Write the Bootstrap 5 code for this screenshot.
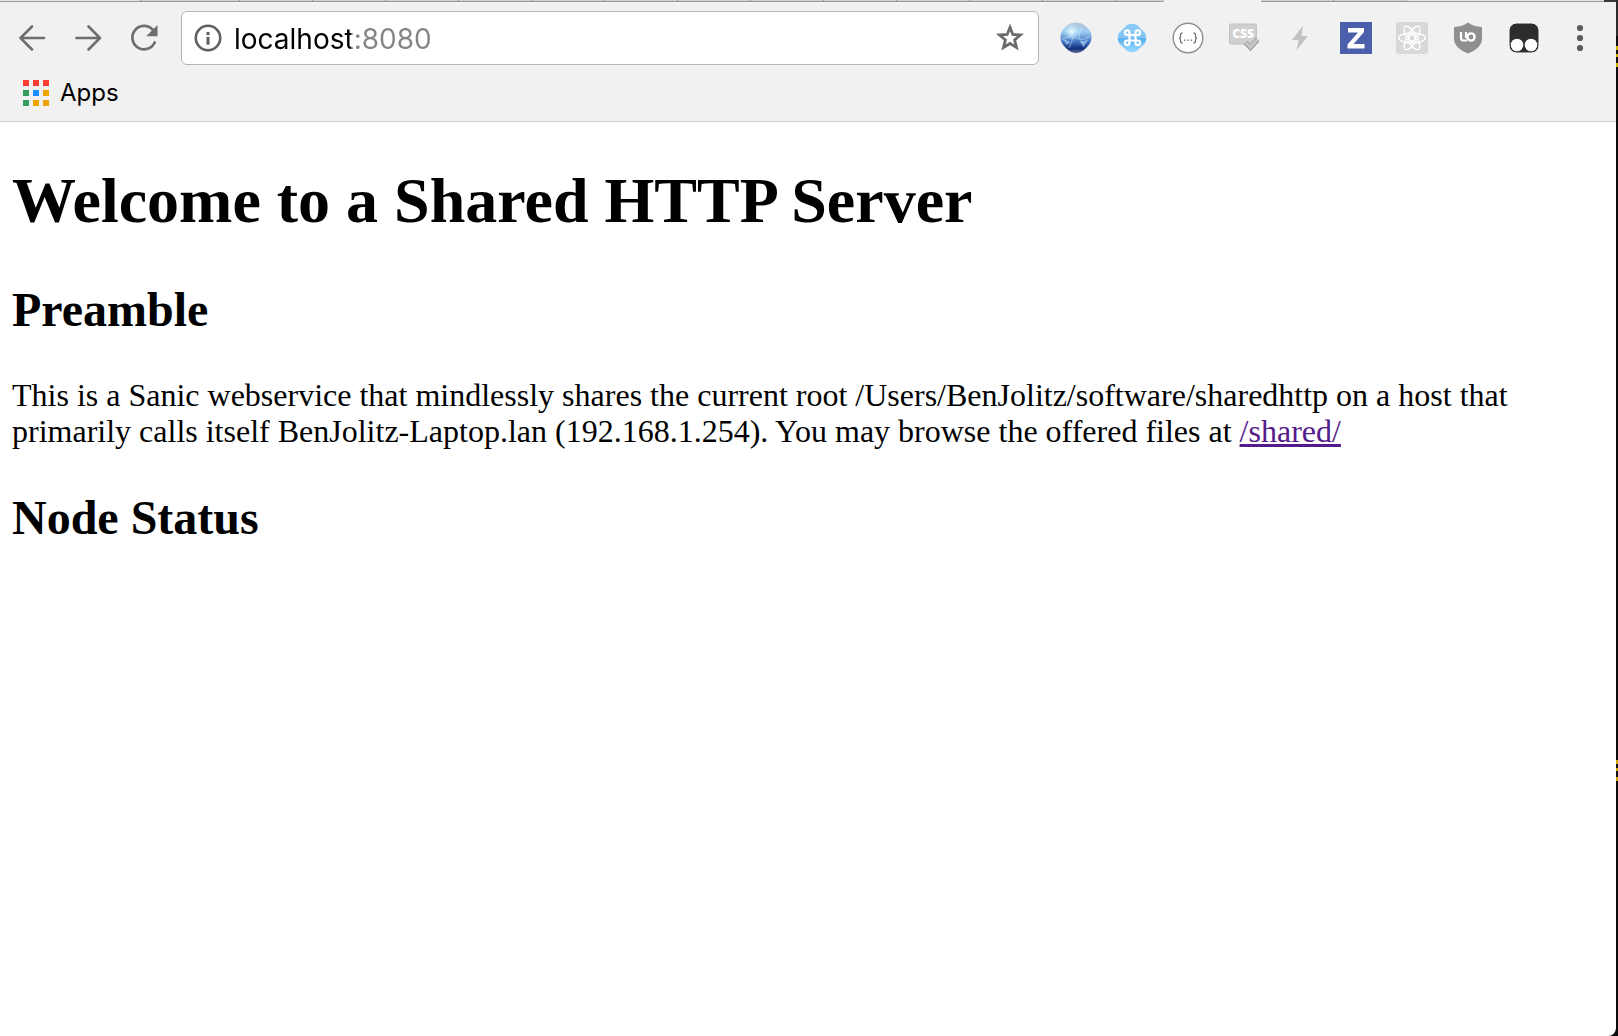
<!DOCTYPE html>
<html lang="en">
<head>
<meta charset="utf-8">
<meta name="viewport" content="width=device-width, initial-scale=1">
<title>localhost:8080</title>
<link href="https://cdn.jsdelivr.net/npm/bootstrap@5.3.0/dist/css/bootstrap.min.css" rel="stylesheet">
<style>
  body { background: linear-gradient(#2b2b2e 0 36px, #0c0c0e 36px 46px, #c9b400 46px 50px, #111 50px 54px, #c9b400 54px 57px, #111 57px 63px, #c9b400 63px 67px, #0c0c0e 67px 760px, #c9a800 760px 764px, #111 764px 768px, #c9a800 768px 771px, #111 771px 777px, #c9a800 777px 781px, #0c0c0e 781px); font-family: Inter, "Liberation Sans", sans-serif; color: #000; }
  .desktop-edge { padding-right: 2px; }
  .browser { background: #fff; border-bottom-right-radius: 8px; overflow: hidden; }
  .window-top { background: #3a3836; }
  .tab-strip { height: 2px; background: #e4e4e4; margin-right: 12px; }
  .tab-edge { flex: 0 1 73px; background: #d0d0d0; border-right: 1px solid #999; border-bottom: 1px solid #999; }
  .tab-edge.first { flex-basis: 141px; background: #e4e4e4; }
  .tab-edge.second { flex-basis: 99px; }
  .tab-edge.last { flex-basis: 48px; border-right: 0; border-radius: 0 0 2px 0; }
  .tab-edge.current { flex-basis: 97px; background: #f1f1f1; border: 0; }
  .tab-rest { border-bottom: 1px solid #999; }
  .chrome-bar { background: #f1f1f1; border-bottom: 1px solid #d2d2d2; }
  .toolbar-row { padding: 9px 8px 0 4px; }
  .tool { width: 56px; height: 54px; padding: 0; border: 0; border-radius: 4px; display: flex; align-items: center; justify-content: center; flex: none; }
  .omnibox { height: 54px; margin: 0 9px; border: 1px solid #b5b5b5; border-radius: 6px; background: #fff; }
  .omnibox .tool { width: 52px; }
  .omnibox .tool:last-child { width: 56px; }
  .address { font-size: 28px; line-height: 36px; height: 52px; border: 0; padding: 2px 0 0; min-width: 0; background: linear-gradient(90deg, #000 117px, #858585 117px); -webkit-background-clip: text; background-clip: text; -webkit-text-fill-color: transparent; outline: 0; }
  .bookmarks-row { height: 56px; padding: 0 23px; }
  .apps-link { font-size: 24px; line-height: 32px; gap: 11px; color: #000; }
  .served-page { font-family: "Liberation Serif", serif; padding: 43px 12px 0; font-size: 32px; line-height: 36px; min-height: calc(100vh - 122px); }
  .served-page h1 { font-size: 64px; line-height: 72px; font-weight: 700; margin: 0 0 46px; }
  .served-page h2 { font-size: 48px; line-height: 54px; font-weight: 700; margin: 0 0 40px; }
  .served-page p { margin: 0 0 42px; }
  .served-page a { color: #551a8b; }
</style>
</head>
<body>
<div class="desktop-edge">
<div class="browser min-vh-100">
  <header class="window-top">
    <div class="tab-strip d-flex">
      <div class="tab-edge first"></div><div class="tab-edge second"></div>
      <div class="tab-edge"></div><div class="tab-edge"></div><div class="tab-edge"></div><div class="tab-edge"></div>
      <div class="tab-edge"></div><div class="tab-edge"></div><div class="tab-edge"></div><div class="tab-edge"></div>
      <div class="tab-edge"></div><div class="tab-edge"></div><div class="tab-edge"></div><div class="tab-edge"></div>
      <div class="tab-edge last"></div><div class="tab-edge current"></div>
      <div class="tab-edge"></div><div class="tab-edge"></div><div class="tab-rest flex-fill"></div>
    </div>
    <div class="chrome-bar">
      <nav class="toolbar-row d-flex align-items-center" aria-label="Browser toolbar">
        <button class="btn tool" type="button" aria-label="Back"><svg width="32" height="32" viewBox="0 0 32 32" fill="none" stroke="#6e6e6e" stroke-width="2.6" stroke-linecap="round"><path d="M16 4.500 4.500 16 16 27.500M4.500 16H28"/></svg></button>
        <button class="btn tool" type="button" aria-label="Forward"><svg width="32" height="32" viewBox="0 0 32 32" fill="none" stroke="#6e6e6e" stroke-width="2.600" stroke-linecap="round"><path d="M16.500 4.500 28 16 16.500 27.500M28 16H4.500"/></svg></button>
        <button class="btn tool" type="button" aria-label="Reload"><svg width="32" height="32" viewBox="0 0 32 32"><path d="M24.500 7.500A11.700 11.700 0 1 0 26.700 20.500" fill="none" stroke="#6e6e6e" stroke-width="2.700" stroke-linecap="round"/><path d="M29.500 3v11.300h-11.300z" fill="#6e6e6e"/></svg></button>
        <div class="omnibox d-flex align-items-center flex-fill">
          <button class="btn tool" type="button" aria-label="View site information"><svg width="28" height="28" viewBox="0 0 28 28"><circle cx="14" cy="14" r="12.200" fill="none" stroke="#5f5f5f" stroke-width="2.600"/><path d="M12.500 8h3v3h-3zM12.500 12.800h3v8h-3z" fill="#5f5f5f"/></svg></button>
          <input class="address flex-fill" type="text" value="localhost:8080" aria-label="Address">
          <button class="btn tool" type="button" aria-label="Bookmark this page"><svg width="30" height="30" viewBox="0 0 30 30"><path d="M15 4.300 17.800 11.400 25.500 12 19.600 16.900 21.500 24.500 15 20.500 8.500 24.500 10.400 16.900 4.500 12 12.200 11.400Z" fill="none" stroke="#6b6b6b" stroke-width="2.800"/></svg></button>
        </div>
        <button class="btn tool" type="button" aria-label="Crystal sphere extension"><svg width="32" height="32" viewBox="0 0 32 32"><defs><linearGradient id="orb" x1="0" y1="0" x2="0" y2="1"><stop offset="0" stop-color="#b4c4d8"/><stop offset=".3" stop-color="#9fcdf2"/><stop offset=".6" stop-color="#4a7fc6"/><stop offset=".85" stop-color="#12307f"/><stop offset="1" stop-color="#5a6a90"/></linearGradient><radialGradient id="glow"><stop offset="0" stop-color="#eafcff"/><stop offset="1" stop-color="#bfeaff" stop-opacity="0"/></radialGradient></defs><path d="M16 .5C22 .5 26 4 29 7.500 32.500 11 32 19 29.500 22 26 26.500 22 31 16 31S6 26.500 2.500 22C0 19-.5 11 3 7.500 6 4 10 .5 16 .5Z" fill="url(#orb)"/><circle cx="12" cy="9.500" r="9" fill="url(#glow)"/><path d="M2 18Q10 12 16 16T30 14M9 8 13 16 9 26M21 5 19 15 24 25" fill="none" stroke="#d8f0ff" stroke-opacity=".35" stroke-width="1.500"/><path d="M3 17 10 20 7 23zM20 20l8-2-4 6z" fill="#c4dcff" fill-opacity=".6"/></svg></button>
        <button class="btn tool" type="button" aria-label="Command shortcuts extension"><svg width="32" height="32" viewBox="0 0 32 32"><defs><linearGradient id="cmd" x1="0" y1="0" x2="0" y2="1"><stop offset="0" stop-color="#8bc9f7"/><stop offset=".5" stop-color="#82c5f6"/><stop offset=".52" stop-color="#58aff0"/><stop offset="1" stop-color="#9cdcff"/></linearGradient></defs><path d="M11 3Q16 .5 21 3L29 11Q31.500 16 29 21L21 29Q16 31.500 11 29L3 21Q.5 16 3 11Z" fill="url(#cmd)"/><path d="M13.500 13h6v5.500h-6zM13.500 13h-2.200A2.300 2.300 0 1 1 13.500 10.600zM19.500 13v-2.400A2.300 2.300 0 1 1 21.700 13zM19.500 18.500h2.200A2.300 2.300 0 1 1 19.500 20.900zM13.500 18.500v2.400A2.300 2.300 0 1 1 11.300 18.500z" fill="none" stroke="#fff" stroke-width="2.200"/></svg></button>
        <button class="btn tool" type="button" aria-label="JSON viewer extension"><svg width="32" height="32" viewBox="0 0 32 32"><circle cx="16" cy="16" r="14.800" fill="#fff" stroke="#8f8f8f" stroke-width="1.400"/><path d="M10.500 11Q8.500 11 8.500 13v1.500Q8.500 16 7 16 8.500 16 8.500 17.500V19Q8.500 21 10.500 21M21.500 11q2 0 2 2v1.500Q23.500 16 25 16 23.500 16 23.500 17.500V19q0 2-2 2" fill="none" stroke="#777" stroke-width="1.300"/><path d="M12 17.500h1.500V19H12zM15.300 17.500h1.500V19h-1.500zM18.600 17.500h1.500V19h-1.500z" fill="#888"/></svg></button>
        <button class="btn tool" type="button" aria-label="CSS checker extension"><svg width="32" height="32" viewBox="0 0 32 32"><rect x="1.500" y="2" width="27" height="20" rx="1.500" fill="#d0d0d0" stroke="#c0c0c0"/><text x="15" y="16" text-anchor="middle" font-family="Open Sans, sans-serif" font-size="12" font-weight="800" fill="#fff">CSS</text><path d="m17.500 20.500 5 5 7-8" fill="none" stroke="#999" stroke-width="5"/><path d="m17.800 20.500 4.700 4.700 6.700-7.700" fill="none" stroke="#c4c4c4" stroke-width="3.400"/></svg></button>
        <button class="btn tool" type="button" aria-label="Lightning extension"><svg width="32" height="32" viewBox="0 0 32 32"><path d="M19 3.500 8 18h6.500L12.500 28.500 24 14h-6.500z" fill="#c3c3c3"/></svg></button>
        <button class="btn tool" type="button" aria-label="Z extension"><svg width="32" height="32" viewBox="0 0 32 32"><path d="M0 0h32v32H0z" fill="#4b5fab"/><path d="M8 6h16v4L13.500 22H24.500v4.500H7.500v-4L18 10.500H8z" fill="#fff"/></svg></button>
        <button class="btn tool" type="button" aria-label="React developer tools"><svg width="32" height="32" viewBox="0 0 32 32"><rect width="32" height="32" rx="2" fill="#d8d8d8"/><g fill="none" stroke="#fff" stroke-width="1.400"><ellipse cx="16" cy="16" rx="13.300" ry="5"/><ellipse cx="16" cy="16" rx="13.300" ry="5" transform="rotate(60 16 16)"/><ellipse cx="16" cy="16" rx="13.300" ry="5" transform="rotate(120 16 16)"/></g><circle cx="16" cy="16" r="3.200" fill="#d8d8d8" stroke="#fff" stroke-width="1.600"/></svg></button>
        <button class="btn tool" type="button" aria-label="uBlock Origin"><svg width="32" height="32" viewBox="0 0 32 32"><path d="M16 .5Q21 4.500 30 5v11.500Q30 26 16 31.500 2 26 2 16.500V5Q11 4.500 16 .5Z" fill="#8f8f8f"/><path d="M9 10v6q0 2.500 2.500 2.500h3.500M14 10v6" fill="none" stroke="#fff" stroke-width="2.200"/><circle cx="19" cy="15" r="3.600" fill="none" stroke="#fff" stroke-width="2.400"/></svg></button>
        <button class="btn tool" type="button" aria-label="Tampermonkey"><svg width="32" height="32" viewBox="0 0 32 32"><rect x="1" y="1" width="30" height="30" rx="7.500" fill="#2d2d2d" stroke="#fff"/><circle cx="9" cy="23" r="6.300" fill="#fff"/><circle cx="23" cy="23" r="6.300" fill="#fff"/></svg></button>
        <button class="btn tool" type="button" aria-label="Menu"><svg width="32" height="32" viewBox="0 0 32 32" fill="#5c5c5c"><circle cx="16" cy="6" r="3.100"/><circle cx="16" cy="16" r="3.100"/><circle cx="16" cy="26" r="3.100"/></svg></button>
      </nav>
      <nav class="bookmarks-row d-flex align-items-center" aria-label="Bookmarks">
        <a class="apps-link d-flex align-items-center text-decoration-none" href="#apps"><svg width="26" height="26" viewBox="0 0 26 26"><path d="M0 0h6v6H0zM10 0h6v6h-6zM20 0h6v6h-6z" fill="#fa3c35"/><path d="M0 10h6v6H0zM0 20h6v6H0z" fill="#319f5a"/><path d="M10 10h6v6h-6z" fill="#1a8cff"/><path d="M20 10h6v6h-6zM10 20h6v6h-6zM20 20h6v6h-6z" fill="#f0a400"/></svg>Apps</a>
      </nav>
    </div>
  </header>
  <main class="served-page">
    <h1>Welcome to a Shared HTTP Server</h1>
    <h2>Preamble</h2>
    <p>This is a Sanic webservice that mindlessly shares the current root /Users/BenJolitz/software/sharedhttp on a host that primarily calls itself BenJolitz-Laptop.lan (192.168.1.254). You may browse the offered files at <a href="/shared/">/shared/</a></p>
    <h2>Node Status</h2>
  </main>
</div>
</div>
<script src="https://cdn.jsdelivr.net/npm/bootstrap@5.3.0/dist/js/bootstrap.bundle.min.js"></script>
</body>
</html>
